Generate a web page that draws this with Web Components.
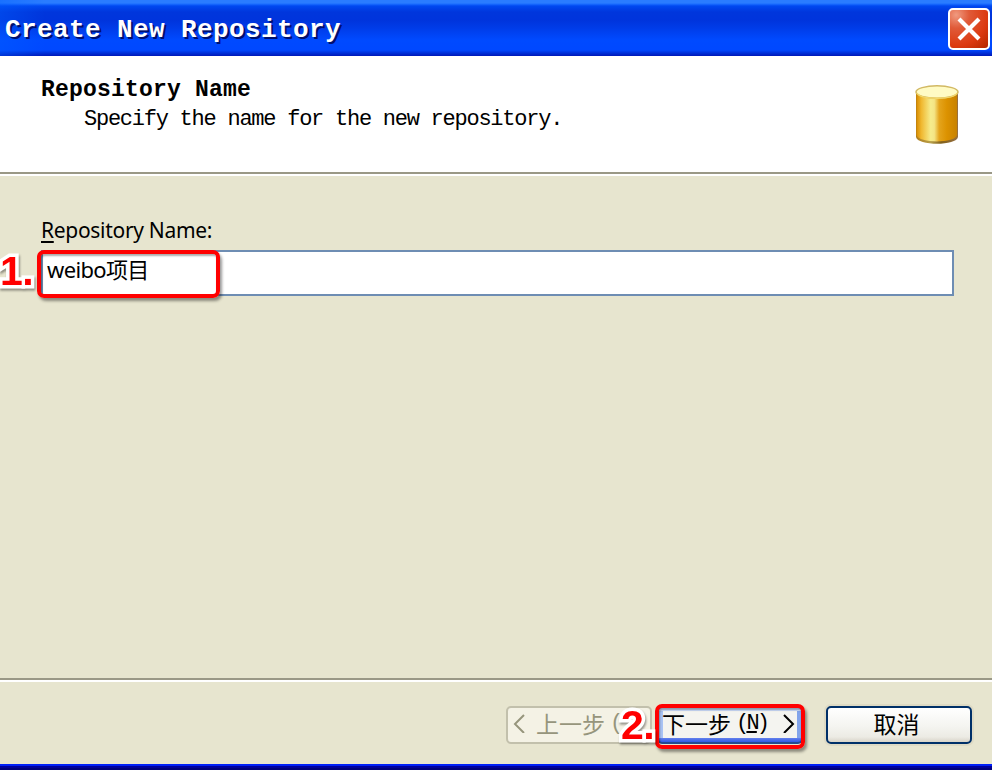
<!DOCTYPE html>
<html lang="zh"><head><meta charset="utf-8"><title>Create New Repository</title>
<style>html,body{margin:0;width:992px;height:770px;overflow:hidden}</style></head><body>
<wizard-window>
<title-bar slot="title">Create New Repository</title-bar>
<wizard-header slot="header"><span slot="heading">Repository Name</span><span slot="hint">Specify the name for the new repository.</span></wizard-header>
<name-field><u slot="key">R</u><span slot="label">epository Name:</span><span slot="value">weibo项目</span></name-field>
<wizard-actions slot="actions"></wizard-actions>
</wizard-window>
<script>
function define(name, markup){
  customElements.define(name, class extends HTMLElement{
    constructor(){super();const t=document.createElement('template');t.innerHTML=markup;
      this.attachShadow({mode:'open'}).append(t.content.cloneNode(true));}
  });
}
define('wizard-window',`<style>
:host{box-sizing:border-box;width:992px;height:770px;display:flex;flex-direction:column;background:#e7e5cf;color:#000}
main{flex:1;padding:40px 38px 0 41px}
footer{box-sizing:border-box;flex:none;height:86px;border-top:2px solid #9a9886;box-shadow:inset 0 2px #fff}
.edge{flex:none;height:6px;background:linear-gradient(#0020f8 0 2px,#00009c 2px 4px,#00007c 4px)}
</style><slot name="title"></slot><slot name="header"></slot><main><slot></slot></main>
<footer><slot name="actions"></slot></footer><div class="edge"></div>`);

define('title-bar',`<style>
:host{box-sizing:border-box;flex:none;display:flex;align-items:center;justify-content:space-between;height:56px;padding:1px 2px 0 5px;
background:linear-gradient(90deg,#0060ff66,#0060ff00 45px),linear-gradient(#2a7cff 0 3px,#1a6cff 4px,#0048f0 6px,#0036dc 12px,#0034dc 20px,#003ce8 28px,#004aff 40px,#0048ff 50px,#0030d8 53px,#0018b8 56px);
color:#fff;font:bold 26px/32px "Liberation Mono",monospace;letter-spacing:.4px;text-shadow:2px 2px #00106e;white-space:pre}
span{margin-top:3px}
</style><span><slot></slot></span><svg width="42" height="42" viewBox="0 0 42 42">
<defs><radialGradient id="r" cx=".18" cy=".15" r="1.1"><stop offset="0" stop-color="#f09a80"/><stop offset=".3" stop-color="#e05a38"/><stop offset=".7" stop-color="#dc3a10"/><stop offset="1" stop-color="#b82800"/></radialGradient></defs>
<rect x="1" y="1" width="40" height="40" rx="4" fill="url(#r)" stroke="#fff" stroke-width="2"/>
<path d="M11 11 31 31M31 11 11 31" stroke="#fff" stroke-width="4.2"/></svg>`);

define('wizard-header',`<style>
:host{box-sizing:border-box;flex:none;display:flex;justify-content:space-between;height:120px;padding:19px 33px 0 41px;background:linear-gradient(#fff 0 116px,#9a9886 116px 118px,#fff 118px);font-family:"Liberation Mono",monospace;white-space:pre}
.h{font-weight:bold;font-size:23px;line-height:30px;letter-spacing:.2px}
.s{font-size:22px;line-height:30px;letter-spacing:-1.25px;padding-left:43px}
</style><div><div class="h"><slot name="heading"></slot></div><div class="s"><slot name="hint"></slot></div></div><cylinder-icon></cylinder-icon>`);

define('cylinder-icon',`<style>:host{display:block;padding-top:10px}svg{display:block}</style><svg width="44" height="60" viewBox="0 0 44 60"><defs>
<linearGradient id="g"><stop offset="0" stop-color="#d88c00"/><stop offset=".12" stop-color="#f0b830"/><stop offset=".35" stop-color="#f6ec8c"/><stop offset=".44" stop-color="#f4e484"/><stop offset=".56" stop-color="#e4a41c"/><stop offset=".75" stop-color="#dc9200"/><stop offset="1" stop-color="#c88200"/></linearGradient>
<linearGradient id="e"><stop offset="0" stop-color="#b07c18"/><stop offset=".35" stop-color="#b8a04c"/><stop offset=".6" stop-color="#80601c"/><stop offset="1" stop-color="#987040"/></linearGradient></defs>
<path d="M1 7V52C2 61 42 61 43 52V7Z" fill="url(#e)"/><path d="M1.5 7V50C3 58.5 41 58.5 42 50V7Z" fill="url(#g)"/>
<ellipse cx="22" cy="7" rx="21" ry="6.2" fill="#fffbc4" stroke="#d2b964" stroke-width="1.5"/><path d="M2 8C6 15 38 15 42 8" fill="none" stroke="#f4d868" stroke-width="1.5"/></svg>`);

define('name-field',`<style>
:host{display:block;font-family:"Noto Sans","Noto Sans CJK SC",sans-serif}
.l{height:34px;font-size:21px;line-height:28px;letter-spacing:-.3px;white-space:pre}
::slotted(u){text-decoration-thickness:2px;text-underline-offset:3px;text-decoration-skip-ink:none}
.box{position:relative;box-sizing:border-box;width:913px;height:46px;border:2px solid #6e8db3;background:#fff;padding:0 4px;font-size:22px;line-height:34px;letter-spacing:-.65px;white-space:pre}
highlight-frame{position:absolute;left:-6px;top:-2px}
step-mark{position:absolute;left:-43px;top:-4px}
</style><div class="l"><slot name="key"></slot><slot name="label"></slot></div>
<div class="box"><slot name="value"></slot><highlight-frame style="width:183px;height:48px"></highlight-frame><step-mark>1.</step-mark></div>`);

define('highlight-frame',`<style>:host{box-sizing:border-box;display:block;border:4px solid #f00;border-radius:7px;box-shadow:2px 3px 3px #0006,inset 1px 2px 2px #0005}</style>`);

define('step-mark',`<style>:host{display:block;color:#f00;font:bold 41px/46px "Liberation Sans",Arial,sans-serif;letter-spacing:-.5px;white-space:pre;-webkit-text-stroke:7px #fff;paint-order:stroke fill;stroke-linejoin:round;filter:drop-shadow(1px 2px 1px #0006)}</style><slot></slot>`);

define('push-button',`<style>
:host{position:relative;box-sizing:border-box;flex:none;display:flex;align-items:center;justify-content:center;width:146px;height:38px;border:2px solid #003068;border-radius:5px;background:linear-gradient(#fff,#f4f4f0 55%,#ecebe4 85%,#d8d4c8);box-shadow:0 0 0 2px #dedac4;font:23px/32px "Noto Sans CJK SC",sans-serif;color:#000;white-space:pre;padding:0 5px 5px 0}
:host([disabled]){color:#96957c;border-color:#c2c0ac;background:#f4f2e5;box-shadow:none;justify-content:flex-start}
:host([primary]){border-color:#234a90;background:linear-gradient(#cfe0ff 0 3px,#fff0 3px 30px,#6482ec 30px,#3158e4),linear-gradient(90deg,#a9c3f4 0 4px,#f4f4f0 4px 138px,#82a4ea 138px);box-shadow:none;justify-content:flex-start}
</style><slot></slot>`);

define('wizard-actions',`<style>
:host{display:flex;justify-content:flex-end;padding:26px 20px 0 0}
push-button[primary]{margin:0 23px 0 5px}
.t{font:23px/32px "Noto Sans CJK SC",sans-serif}
.k{font:22px/32px "Liberation Mono",monospace;letter-spacing:-2.8px;padding-top:3px}
u{text-decoration-thickness:2px;text-underline-offset:2px}
svg{flex:none}
highlight-frame{position:absolute;left:-4px;top:-4px;width:150px;height:45px}
step-mark{position:absolute;left:-38px;top:-6px}
</style>
<push-button disabled><svg width="28" height="20"><path d="M16 2 7 11 16 20" fill="none" stroke="#96957c" stroke-width="2"/></svg><span class="t">上一步</span><span class="k" style="margin-left:5px">(</span></push-button>
<push-button primary><span class="t" style="margin-left:3px">下一步</span><span class="k" style="margin-left:5px">(<u>N</u>)</span><svg width="28" height="20" style="margin-left:6px"><path d="M11 2 20 11 11 20" fill="none" stroke="#000" stroke-width="2"/></svg><highlight-frame></highlight-frame><step-mark>2.</step-mark></push-button>
<push-button><span>取消</span></push-button>`);
</script></body></html>
